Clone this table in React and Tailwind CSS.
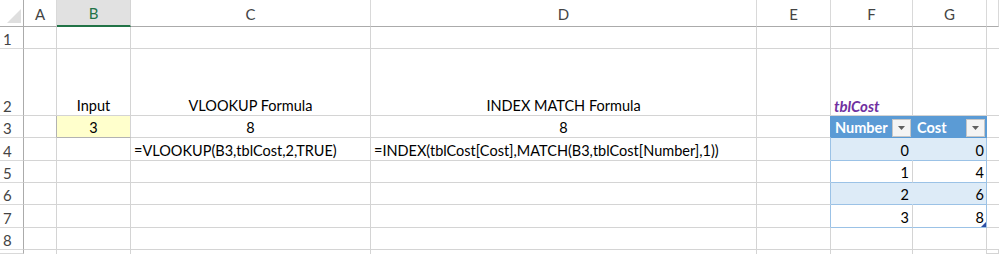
import React from 'react';

// sheet geometry: row header + columns A..G + a sliver of H
const gridCols = 'grid-cols-[24px_33px_74px_240px_386px_74px_82px_74px_1fr]';
const gridRows = 'grid-rows-[27px_22px_67px_22px_23px_22px_22px_23px_22px_1fr]';

const colLetters = ['A', 'B', 'C', 'D', 'E', 'F', 'G', ''];

const FilterButton = () => (
  <span className="flex h-[18px] w-[19px] items-center justify-center border border-[#c6c6c6] bg-[#f4f4f4]">
    <svg width="7" height="4" viewBox="0 0 7 4">
      <path d="M0 0h7L3.5 4z" fill="#5f5f5f" />
    </svg>
  </span>
);

const Cell = ({ className = '', color = 'text-black', children }) => (
  <div className={`flex items-end border-b border-r border-[#d4d4d4] text-[14.5px] leading-[18px] ${color} ${className}`}>
    {children}
  </div>
);

const RowHead = ({ n }) => (
  <div className="flex items-end border-b border-r border-b-[#d9d9d9] border-r-[#ababab] pl-[3px] text-[15px] leading-[18px] text-[#444]">
    {n}
  </div>
);

const blank = (n, last) =>
  Array.from({ length: n }, (_, i) => <Cell key={i} />).concat(
    <Cell key="h" className={last ? 'border-0' : 'border-r-0'} />
  );

export default function App() {
  return (
    <div
      className={`grid h-[254px] w-[999px] overflow-hidden bg-white ${gridCols} ${gridRows}`}
      style={{ fontFamily: 'Lato, "Open Sans", sans-serif' }}
    >
      {/* corner */}
      <div className="relative border-b border-r border-b-[#ababab] border-r-[#ababab]">
        <svg className="absolute bottom-[3px] right-[2px]" width="14" height="14" viewBox="0 0 14 14">
          <path d="M14 0v14H0z" fill="#dfdfdf" />
        </svg>
      </div>

      {/* column headings */}
      {colLetters.map((c, i) =>
        c === 'B' ? (
          <div
            key={i}
            className="flex items-center justify-center border-b-2 border-r border-b-[#217346] border-r-[#d4d4d4] bg-[#e1e1e1] pt-[2px] text-[15px] text-[#217346]"
          >
            {c}
          </div>
        ) : (
          <div
            key={i}
            className="flex items-center justify-center border-b border-r border-b-[#ababab] border-r-[#d9d9d9] pt-[3px] text-[15px] text-[#444]"
          >
            {c}
          </div>
        )
      )}

      {/* row 1 */}
      <RowHead n="1" />
      {blank(7)}

      {/* row 2 */}
      <RowHead n="2" />
      <Cell />
      <Cell className="justify-center">Input</Cell>
      <Cell className="justify-center">VLOOKUP Formula</Cell>
      <Cell className="justify-center">INDEX MATCH Formula</Cell>
      <Cell />
      <Cell color="text-[#7030a0]" className="pl-[3px] text-[15px] font-bold italic">
        tblCost
      </Cell>
      <Cell />
      <Cell className="border-r-0" />

      {/* row 3 */}
      <RowHead n="3" />
      <Cell className="border-r-[#b2b2b2]" />
      <Cell className="justify-center border-b-[#b2b2b2] bg-[#ffffcc]">3</Cell>
      <Cell className="justify-center">8</Cell>
      <Cell className="justify-center">8</Cell>
      <Cell className="border-r-[#5b9bd5]" />
      <Cell
        color="text-white"
        className="items-center justify-between border-b-[#5b9bd5] border-r-[#5b9bd5] bg-[#5b9bd5] pl-[4px] pr-[1px] font-bold"
      >
        <span>Number</span>
        <FilterButton />
      </Cell>
      <Cell
        color="text-white"
        className="items-center justify-between border-b-[#5b9bd5] border-r-[#5b9bd5] bg-[#5b9bd5] pl-[4px] pr-[1px] font-bold"
      >
        <span>Cost</span>
        <FilterButton />
      </Cell>
      <Cell className="border-r-0" />

      {/* row 4 */}
      <RowHead n="4" />
      <Cell />
      <Cell />
      <Cell className="whitespace-nowrap pl-[3px]">=VLOOKUP(B3,tblCost,2,TRUE)</Cell>
      <Cell className="whitespace-nowrap pl-[3px]">=INDEX(tblCost[Cost],MATCH(B3,tblCost[Number],1))</Cell>
      <Cell className="border-r-[#9bc2e6]" />
      <Cell className="justify-end border-b-[#9bc2e6] border-r-[#ddebf7] bg-[#ddebf7] pr-[3px]">0</Cell>
      <Cell className="justify-end border-b-[#9bc2e6] border-r-[#9bc2e6] bg-[#ddebf7] pr-[2px]">0</Cell>
      <Cell className="border-r-0" />

      {/* row 5 */}
      <RowHead n="5" />
      <Cell />
      <Cell />
      <Cell />
      <Cell />
      <Cell className="border-r-[#9bc2e6]" />
      <Cell className="justify-end border-b-[#9bc2e6] pr-[3px]">1</Cell>
      <Cell className="justify-end border-b-[#9bc2e6] border-r-[#9bc2e6] pr-[2px]">4</Cell>
      <Cell className="border-r-0" />

      {/* row 6 */}
      <RowHead n="6" />
      <Cell />
      <Cell />
      <Cell />
      <Cell />
      <Cell className="border-r-[#9bc2e6]" />
      <Cell className="justify-end border-b-[#9bc2e6] border-r-[#ddebf7] bg-[#ddebf7] pr-[3px]">2</Cell>
      <Cell className="justify-end border-b-[#9bc2e6] border-r-[#9bc2e6] bg-[#ddebf7] pr-[2px]">6</Cell>
      <Cell className="border-r-0" />

      {/* row 7 */}
      <RowHead n="7" />
      <Cell />
      <Cell />
      <Cell />
      <Cell />
      <Cell className="border-r-[#9bc2e6]" />
      <Cell className="justify-end border-b-[#9bc2e6] pr-[3px]">3</Cell>
      <Cell className="relative justify-end border-b-[#9bc2e6] border-r-[#9bc2e6] pr-[2px]">
        8
        {/* table resize handle */}
        <svg className="absolute bottom-0 right-0" width="5" height="5" viewBox="0 0 5 5">
          <path d="M5 0v5H0z" fill="#2e4fa6" />
        </svg>
      </Cell>
      <Cell className="border-r-0" />

      {/* row 8 */}
      <RowHead n="8" />
      {blank(7)}

      {/* row 9, cut off */}
      <RowHead n="" />
      {Array.from({ length: 7 }, (_, i) => (
        <Cell key={i} className="border-b-0" />
      ))}
      <Cell className="border-0" />
    </div>
  );
}
